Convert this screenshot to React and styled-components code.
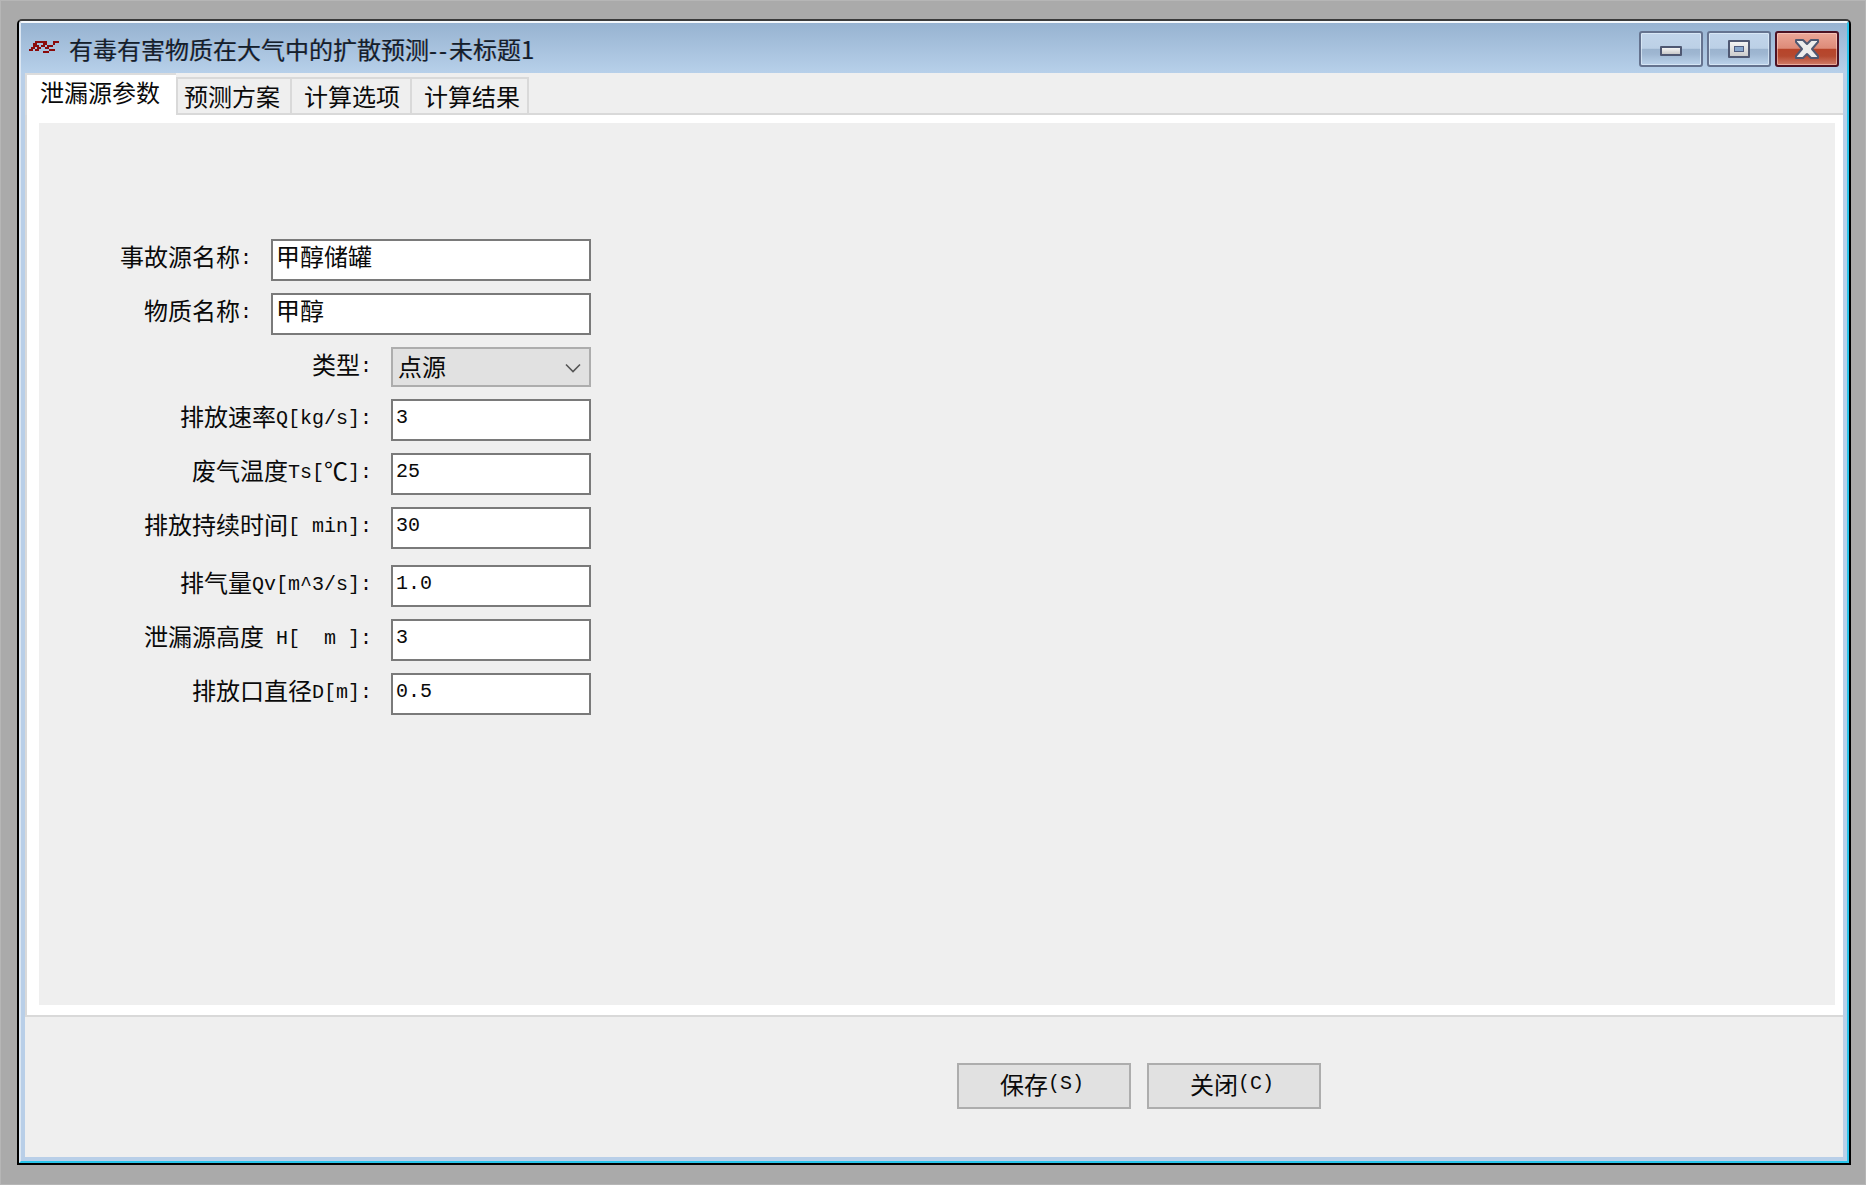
import React from 'react';
import styled, { createGlobalStyle } from 'styled-components';

const CJK = '"Noto Sans CJK SC", "Liberation Sans", sans-serif';

const Global = createGlobalStyle`
  html, body { margin: 0; padding: 0; background: #aaaaaa; }
  * { box-sizing: border-box; }
`;

const Page = styled.div`
  width: 1866px;
  height: 1185px;
  padding: 18px 14px 19px 16px;
  border: 1px solid #b6b6b6;
  background: #aaaaaa;
  overflow: hidden;
  font-family: ${CJK};
  font-size: 24px;
  color: #0a0a0a;
`;

const Frame = styled.div`
  height: 100%;
  border: 2px solid #000;
  border-top-color: #3a3a3a;
  border-top-left-radius: 5px;
  border-top-right-radius: 5px;
`;

const Chrome = styled.div`
  height: 100%;
  display: flex;
  flex-direction: column;
  background: #b9cfe8;
  border-top: 2px solid #f4f8fb;
  border-left: 2px solid #dbe6f2;
  border-right: 2px solid #2ac4ea;
  border-bottom: 2px solid #2ac4ea;
  border-top-left-radius: 3px;
  border-top-right-radius: 3px;
`;

const TitleBar = styled.div`
  flex: none;
  height: 50px;
  display: flex;
  align-items: flex-start;
  padding: 8px 8px 0 8px;
  background: linear-gradient(#97b3d1, #b7d0ea);
`;

const Logo = styled.svg`
  flex: none;
  width: 30px;
  height: 12px;
  margin-top: 10px;
`;

const TitleText = styled.div`
  flex: 1;
  margin-left: 10px;
  line-height: 36px;
  color: #15202b;
  white-space: pre;
  text-shadow: 0.6px 0 rgba(30, 120, 225, 0.45), -0.6px 0 rgba(170, 105, 30, 0.45);
`;

const Dash = styled.span`
  font-family: "Liberation Sans", sans-serif;
  letter-spacing: 2px;
`;

const WinButtons = styled.div`
  flex: none;
  display: flex;
  gap: 4px;
`;

const WinButton = styled.div`
  width: 64px;
  height: 36px;
  display: flex;
  align-items: center;
  justify-content: center;
  border-radius: 3px;
  border: 2px solid ${p => (p.$close ? '#4d1224' : '#65738f')};
  box-shadow: inset 0 0 0 1px ${p => (p.$close ? 'rgba(255,215,205,.55)' : 'rgba(225,238,250,.7)')};
  background: ${p =>
    p.$close
      ? 'linear-gradient(#eba798 0, #dd8a78 48%, #b7442a 50%, #b5482f 72%, #d07c68 100%)'
      : 'linear-gradient(#c2d5ea 0, #bcd0e6 48%, #9bb3ce 50%, #9fb7d2 66%, #bcd3eb 100%)'};
`;

const MinGlyph = styled.div`
  width: 22px;
  height: 10px;
  margin-top: 4px;
  border: 2px solid #4f5872;
  border-radius: 1px;
  background: linear-gradient(#f5f5f5, #c9c9c9);
`;

const MaxGlyph = styled.div`
  width: 22px;
  height: 18px;
  display: flex;
  align-items: center;
  justify-content: center;
  border: 2px solid #4f5872;
  border-radius: 1px;
  background: linear-gradient(#f3f3f3, #cccccc);
`;

const MaxInner = styled.div`
  width: 10px;
  height: 6px;
  border: 1px solid #4f5c80;
  background: #86a6cc;
`;

const Content = styled.div`
  flex: 1;
  min-height: 0;
  margin: 0 4px 4px;
  display: flex;
  flex-direction: column;
  background: #efefef;
`;

const TabStrip = styled.div`
  flex: none;
  height: 42px;
  display: flex;
  align-items: flex-end;
  border-bottom: 2px solid #d9d9d9;
`;

const ActiveTab = styled.div`
  width: 151px;
  height: 42px;
  margin-bottom: -2px;
  padding-left: 13px;
  line-height: 34px;
  background: #fff;
  border-top: 2px solid #dcdcdc;
  border-left: 2px solid #dcdcdc;
`;

const Tab = styled.div`
  width: ${p => p.$width}px;
  height: 36px;
  padding-left: ${p => p.$pad}px;
  line-height: 33px;
  background: #efefef;
  border-top: 2px solid #d9d9d9;
  border-left: ${p => (p.$first ? '2px solid #d9d9d9' : '0')};
  border-right: 2px solid #d9d9d9;
`;

const TabPane = styled.div`
  flex: none;
  height: 902px;
  padding: 8px 8px 10px 12px;
  display: flex;
  background: #fff;
  border-left: 2px solid #d9d9d9;
  border-bottom: 2px solid #d9d9d9;
`;

const FormPanel = styled.div`
  flex: 1;
  padding-top: 116px;
  background: #efefef;
`;

const Form = styled.div`
  width: 552px;
  display: flex;
  flex-direction: column;
  gap: 12px;
`;

const Row = styled.div`
  display: flex;
  align-items: flex-start;
  margin-top: ${p => (p.$extra ? 4 : 0)}px;
`;

const Label = styled.div`
  flex: 1;
  padding-right: 19px;
  text-align: right;
  white-space: pre;
  line-height: 34px;
`;

const Ascii = styled.span`
  font-family: "Liberation Mono", monospace;
  font-size: 20px;
  line-height: 20px;
  vertical-align: 2px;
  white-space: pre;
`;

const TextField = styled.input`
  flex: none;
  display: block;
  width: ${p => (p.$wide ? 320 : 200)}px;
  height: 42px;
  margin: 0;
  padding: 0 4px ${p => (p.$cjk ? 9 : 5)}px 3px;
  border: 2px solid #7a7a7a;
  border-radius: 0;
  outline: none;
  background: #fff;
  color: #0a0a0a;
  font-family: ${p => (p.$cjk ? CJK : '"Liberation Mono", monospace')};
  font-size: ${p => (p.$cjk ? 24 : 20)}px;
`;

const SelectBox = styled.div`
  flex: none;
  width: 200px;
  height: 40px;
  padding: 0 8px 2px 5px;
  display: flex;
  align-items: center;
  justify-content: space-between;
  border: 2px solid #adadad;
  background: #e1e1e1;
  line-height: 34px;
`;

const Chevron = styled.svg`
  flex: none;
  width: 16px;
  height: 10px;
  margin-top: 4px;
`;

const Footer = styled.div`
  flex: 1;
  display: flex;
  gap: 16px;
  padding: 46px 0 0 932px;
`;

const ActionButton = styled.div`
  width: 174px;
  height: 46px;
  display: flex;
  align-items: center;
  justify-content: center;
  padding-right: 4px;
  padding-bottom: 5px;
  border: 2px solid #adadad;
  background: #e1e1e1;
`;

const upperRows = [
  ['事故源名称', '甲醇储罐'],
  ['物质名称', '甲醇'],
];

const lowerRows = [
  { label: <>排放速率<Ascii>Q[kg/s]:</Ascii></>, value: '3' },
  { label: <>废气温度<Ascii>Ts[</Ascii>℃<Ascii>]:</Ascii></>, value: '25' },
  { label: <>排放持续时间<Ascii>[ min]:</Ascii></>, value: '30' },
  { label: <>排气量<Ascii>Qv[m^3/s]:</Ascii></>, value: '1.0', extra: true },
  { label: <>泄漏源高度<Ascii> H[  m ]:</Ascii></>, value: '3' },
  { label: <>排放口直径<Ascii>D[m]:</Ascii></>, value: '0.5' },
];

const tabs = [
  ['预测方案', 116, 6],
  ['计算选项', 120, 12],
  ['计算结果', 117, 12],
];

const noop = () => {};

export default function App() {
  return (
    <Page>
      <Global />
      <Frame>
        <Chrome>
          <TitleBar>
            <Logo viewBox="29 41 30 12" shapeRendering="crispEdges">
              <path
                fill="#8b0a0a"
                d="M35 41h12v2h-12zM53 41h6v2h-6zM33 43h4v2h-4zM43 43h4v2h-4zM53 43h2v2h-2zM33 45h6v2h-6zM41 45h4v2h-4zM47 45h6v2h-6zM31 47h4v2h-4zM37 47h4v2h-4zM45 47h4v2h-4zM29 49h4v2h-4zM35 49h4v2h-4zM49 49h6v2h-6zM43 51h6v2h-6z"
              />
            </Logo>
            <TitleText>
              有毒有害物质在大气中的扩散预测<Dash>--</Dash>未标题1
            </TitleText>
            <WinButtons>
              <WinButton><MinGlyph /></WinButton>
              <WinButton><MaxGlyph><MaxInner /></MaxGlyph></WinButton>
              <WinButton $close>
                <svg width="24" height="20" viewBox="0 0 24 20">
                  <path
                    d="M1 1h7l4 4 4-4h7v2l-6 7 6 7v2h-7l-4-4-4 4H1v-2l6-7-6-7z"
                    fill="#ececec"
                    stroke="#4f5872"
                    strokeWidth="2"
                    strokeLinejoin="round"
                  />
                </svg>
              </WinButton>
            </WinButtons>
          </TitleBar>
          <Content>
            <TabStrip>
              <ActiveTab>泄漏源参数</ActiveTab>
              {tabs.map(([name, width, pad], i) => (
                <Tab key={name} $width={width} $pad={pad} $first={i === 0}>{name}</Tab>
              ))}
            </TabStrip>
            <TabPane>
              <FormPanel>
                <Form>
                  {upperRows.map(([label, value]) => (
                    <Row key={label}>
                      <Label>{label}<Ascii>:</Ascii></Label>
                      <TextField $wide $cjk readOnly value={value} onChange={noop} />
                    </Row>
                  ))}
                  <Row>
                    <Label>类型<Ascii>:</Ascii></Label>
                    <SelectBox>
                      点源
                      <Chevron viewBox="0 0 16 10">
                        <path d="M1 1.5l7 7 7-7" fill="none" stroke="#555" strokeWidth="1.6" />
                      </Chevron>
                    </SelectBox>
                  </Row>
                  {lowerRows.map((row, i) => (
                    <Row key={i} $extra={row.extra}>
                      <Label>{row.label}</Label>
                      <TextField readOnly value={row.value} onChange={noop} />
                    </Row>
                  ))}
                </Form>
              </FormPanel>
            </TabPane>
            <Footer>
              <ActionButton>保存<Ascii>(S)</Ascii></ActionButton>
              <ActionButton>关闭<Ascii>(C)</Ascii></ActionButton>
            </Footer>
          </Content>
        </Chrome>
      </Frame>
    </Page>
  );
}
